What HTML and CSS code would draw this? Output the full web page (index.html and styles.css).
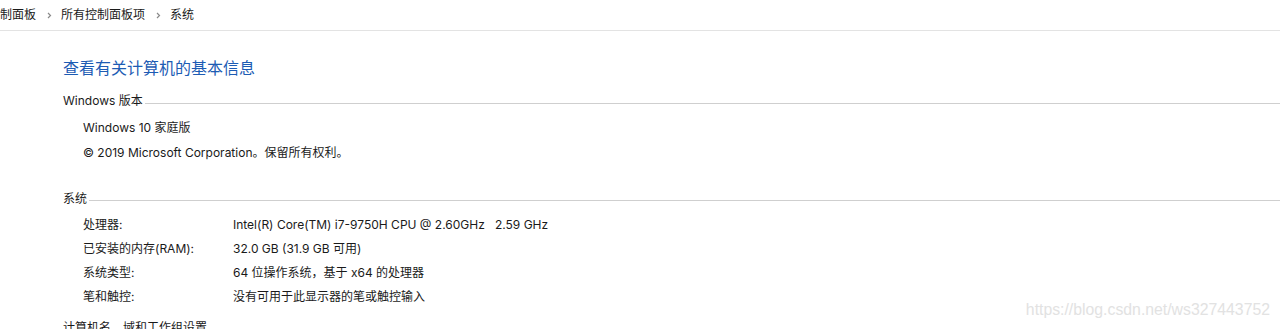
FILE: index.html
```html
<!DOCTYPE html>
<html lang="zh-CN">
<head>
<meta charset="utf-8">
<title>系统</title>
<link rel="stylesheet" href="styles.css">
</head>
<body>
<nav class="breadcrumb">
  <span class="crumb crumb-first">控制面板</span>
  <svg class="chev" width="5" height="7" viewBox="0 0 5 7"><path d="M1 1 L3.5 3.5 L1 6" fill="none" stroke="#8a8a8a" stroke-width="1.2"/></svg>
  <span class="crumb">所有控制面板项</span>
  <svg class="chev" width="5" height="7" viewBox="0 0 5 7"><path d="M1 1 L3.5 3.5 L1 6" fill="none" stroke="#8a8a8a" stroke-width="1.2"/></svg>
  <span class="crumb">系统</span>
</nav>
<main class="content">
  <h1 class="title">查看有关计算机的基本信息</h1>

  <div class="section-head"><span>Windows 版本</span><span class="rule"></span></div>
  <div class="edition">
    <div class="edition-line">Windows 10 家庭版</div>
    <div class="edition-line">© 2019 Microsoft Corporation。保留所有权利。</div>
  </div>

  <div class="section-head sys-head"><span>系统</span><span class="rule rule-sys"></span></div>
  <div class="props">
    <div class="label">处理器:</div><div class="value">Intel(R) Core(TM) i7-9750H CPU @ 2.60GHz&nbsp;&nbsp;&nbsp;2.59 GHz</div>
    <div class="label">已安装的内存(RAM):</div><div class="value">32.0 GB (31.9 GB 可用)</div>
    <div class="label">系统类型:</div><div class="value">64 位操作系统，基于 x64 的处理器</div>
    <div class="label">笔和触控:</div><div class="value">没有可用于此显示器的笔或触控输入</div>
  </div>

  <div class="section-head next-head"><span>计算机名、域和工作组设置</span></div>
</main>
<div class="watermark">https://blog.csdn.net/ws327443752</div>
</body>
</html>
```
FILE: styles.css
```css
html, body {
  margin: 0;
  padding: 0;
  background: #ffffff;
}
body {
  width: 1280px;
  height: 329px;
  overflow: hidden;
  position: relative;
  font-family: "Inter", "Noto Sans", "Noto Sans CJK SC", sans-serif;
  font-size: 12px;
  color: #1a1a1a;
}
.breadcrumb {
  display: flex;
  align-items: center;
  height: 30px;
  border-bottom: 1px solid #e3e3e3;
  white-space: nowrap;
}
.crumb {
  line-height: 30px;
}
.crumb-first {
  margin-left: -12px;
}
.chev {
  margin: 0 9px 0 11px;
}
.content {
  padding-left: 63px;
}
.title {
  margin: 27px 0 0 0;
  font-size: 16px;
  line-height: 20px;
  font-weight: normal;
  color: #1d5cb4;
}
.section-head {
  display: flex;
  align-items: center;
  line-height: 16px;
  margin-top: 15px;
  white-space: nowrap;
}
.rule {
  flex: 1;
  height: 1px;
  background: #cfcfcf;
  margin-left: 2px;
  margin-top: 5px;
}
.edition {
  margin-top: 6px;
  padding-left: 20px;
}
.edition-line {
  line-height: 25px;
}
.sys-head {
  margin-top: 26px;
}
.rule-sys {
  margin-top: 3px;
}
.props {
  display: grid;
  grid-template-columns: 150px auto;
  margin-top: 6px;
  padding-left: 20px;
  line-height: 24px;
}
.next-head {
  margin-top: 11px;
}
.watermark {
  position: absolute;
  right: 10px;
  bottom: 10px;
  line-height: 18px;
  font-family: "Liberation Sans", Arial, sans-serif;
  font-size: 15.8px;
  color: #e2e2e2;
}
```
